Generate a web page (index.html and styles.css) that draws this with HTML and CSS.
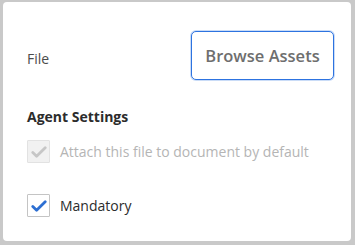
FILE: index.html
```html
<!DOCTYPE html>
<html>
<head>
<meta charset="utf-8">
<link rel="stylesheet" href="styles.css">
</head>
<body>
<div class="card">
  <div class="file-row">
    <span class="label">File</span>
    <button class="browse">Browse Assets</button>
  </div>
  <div class="heading">Agent Settings</div>
  <label class="check disabled">
    <span class="box"><svg width="16" height="12" viewBox="0 0 16 12"><path d="M1.8 6.5 L5.6 10.2 L14.2 1.8" fill="none" stroke="#c6c6c6" stroke-width="2.8" stroke-linecap="round" stroke-linejoin="round"/></svg></span>
    <span class="text">Attach this file to document by default</span>
  </label>
  <label class="check">
    <span class="box"><svg width="16" height="12" viewBox="0 0 16 12"><path d="M1.8 6.5 L5.6 10.2 L14.2 1.8" fill="none" stroke="#2d6fd2" stroke-width="2.8" stroke-linecap="round" stroke-linejoin="round"/></svg></span>
    <span class="text">Mandatory</span>
  </label>
</div>
</body>
</html>
```
FILE: styles.css
```css
html, body { margin: 0; padding: 0; }
body {
  background: #c9c9c9;
  width: 355px;
  height: 245px;
  padding: 2px 4px 4px 3px;
  box-sizing: border-box;
  font-family: "Open Sans", "Liberation Sans", sans-serif;
}
.card {
  background: #fff;
  height: 100%;
  border-radius: 4px;
  box-sizing: border-box;
  padding: 29px 0 0 24px;
}
.file-row {
  display: flex;
  align-items: center;
  justify-content: space-between;
  padding-right: 17px;
}
.label {
  font-size: 14px;
  color: #4b4b4b;
  margin-top: 6px;
}
.browse {
  width: 143px;
  height: 49px;
  border: 1.5px solid #2d73e0;
  border-radius: 5px;
  background: #fff;
  font-family: inherit;
  font-size: 16.5px;
  font-weight: 600;
  color: #6e6e6e;
  padding: 0;
  box-shadow: 0 0 0 1px rgba(45,115,224,0.25);
}
.heading {
  margin-top: 27px;
  font-size: 14px;
  font-weight: 700;
  color: #2c2c2c;
}
.check {
  display: flex;
  align-items: center;
  gap: 10px;
  margin-top: 14px;
}
.check + .check { margin-top: 31px; }
.box {
  width: 21px;
  height: 21px;
  border: 1px solid #c4c4c4;
  border-radius: 1px;
  display: flex;
  align-items: center;
  justify-content: center;
  background: #fff;
}
.disabled .box { background: #f1f1f1; border-color: #e2e2e2; }
.text {
  font-size: 14px;
  color: #2c2c2c;
}
.disabled .text { color: #b5b5b5; }
```
